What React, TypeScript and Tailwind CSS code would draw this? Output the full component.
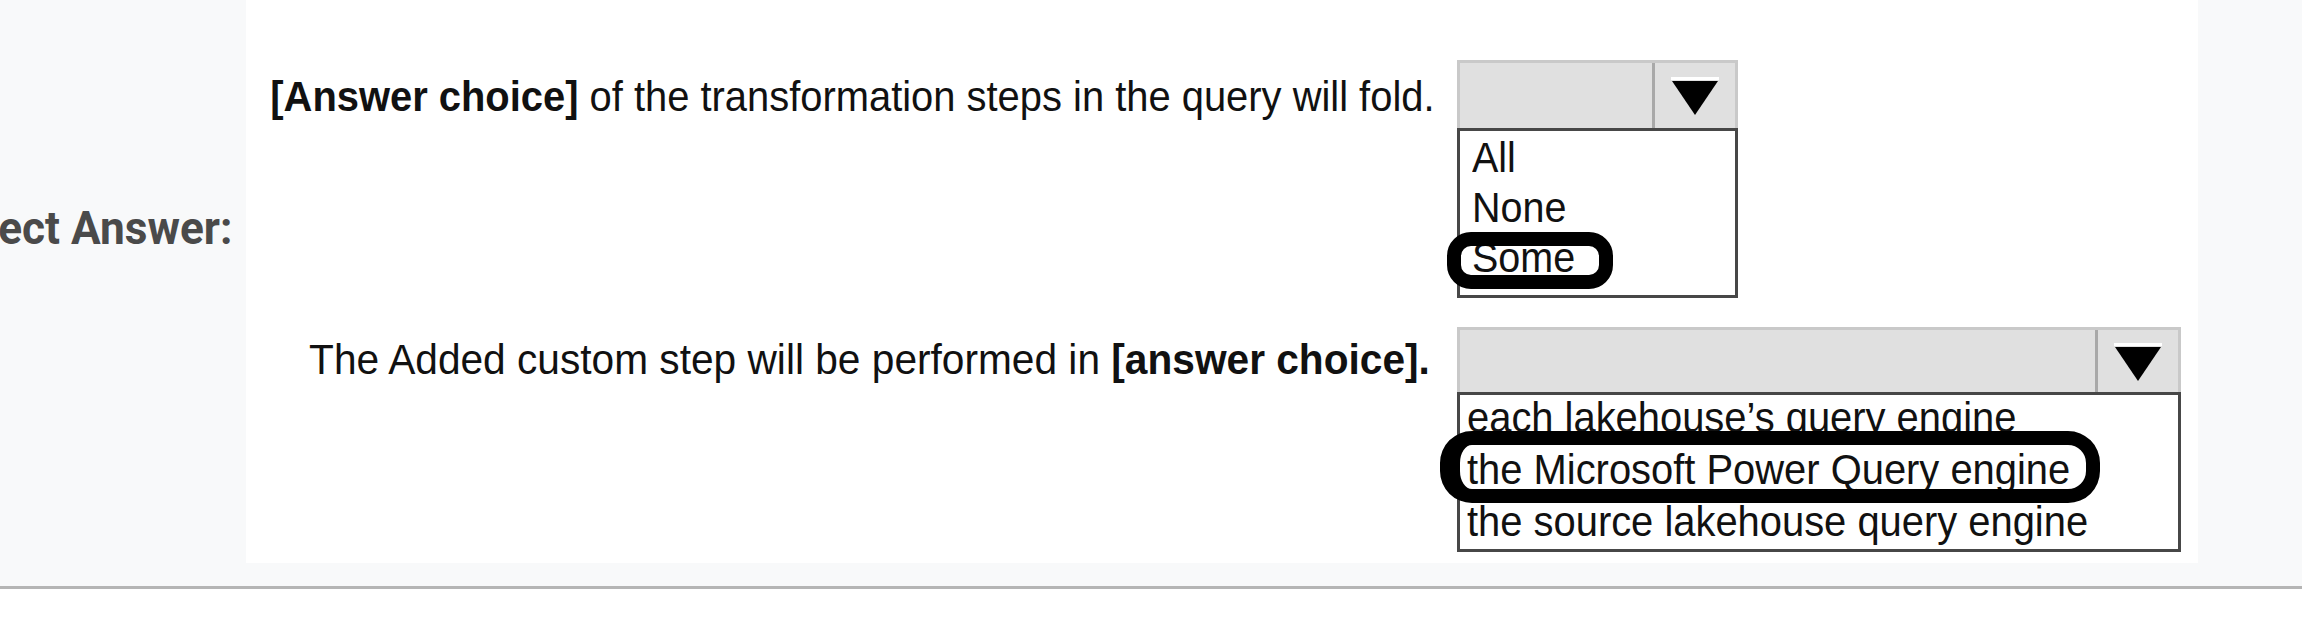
function Arrow() {
  return (
    <svg width="52" height="40" viewBox="0 0 52 40">
      <rect x="2" y="0" width="48" height="3" fill="#ffffff" />
      <polygon points="3,4 49,4 26,38" fill="#000000" />
    </svg>
  )
}

function SelectHeader({ className }: { className: string }) {
  return (
    <div className={`flex bg-[#e0e0e0] border-[3px] border-b-0 border-[#c9c9c9] ${className}`}>
      <div className="flex-1 border-r-[3px] border-[#a9a9a9]" />
      <div className="w-[80px] flex items-center justify-center pt-[3px]">
        <Arrow />
      </div>
    </div>
  )
}

export default function App() {
  return (
    <div className="w-[2302px] h-[630px] bg-white overflow-hidden">
      <div className="flex items-start h-[589px] bg-[#f8f9fa] border-b-[3px] border-[#b5b5b5]">
        {/* label column, the start of the text runs off the page */}
        <div className="w-[246px] shrink-0 overflow-hidden flex justify-end pr-[14px] pt-[204px]">
          <span className="inline-block whitespace-nowrap font-['Roboto',sans-serif] font-bold text-[47px] leading-none text-[#4a4a4a] origin-right scale-x-[0.94]">
            Correct Answer:
          </span>
        </div>

        {/* answer image */}
        <div className="w-[1952px] h-[563px] bg-white pt-[60px] font-['Liberation_Sans',Arial,sans-serif] text-[42px] text-[#111111]">
          <div className="flex items-start">
            <div className="w-[1211px] h-[68px] shrink-0 flex items-center justify-end pr-[22px] pt-[5px]">
              <span className="inline-block whitespace-nowrap leading-none origin-right scale-x-[0.95]">
                <b>[Answer choice]</b> of the transformation steps in the query will fold.
              </span>
            </div>
            <div className="w-[281px]">
              <SelectHeader className="h-[68px]" />
              <div className="relative border-[3px] border-[#474747] bg-white pl-[12px] pt-[2px] pb-[12px] leading-[50px]">
                <div><span className="inline-block origin-left scale-x-[0.94]">All</span></div>
                <div><span className="inline-block origin-left scale-x-[0.94]">None</span></div>
                <div><span className="inline-block origin-left scale-x-[0.94]">Some</span></div>
                <div className="absolute left-[-13px] top-[101px] w-[166px] h-[57px] border-[14px] border-black rounded-[24px]" />
              </div>
            </div>
          </div>

          <div className="flex items-start mt-[29px]">
            <div className="w-[1211px] h-[65px] shrink-0 flex items-center justify-end pr-[27px]">
              <span className="inline-block whitespace-nowrap leading-none origin-right scale-x-[0.968]">
                The Added custom step will be performed in <b>[answer choice].</b>
              </span>
            </div>
            <div className="w-[724px]">
              <SelectHeader className="h-[65px]" />
              <div className="relative flex flex-col gap-[6px] border-[3px] border-[#474747] bg-white pl-[7px] pb-[4px] leading-[46px]">
                <div className="whitespace-nowrap"><span className="inline-block origin-left scale-x-[0.95]">each lakehouse’s query engine</span></div>
                <div className="whitespace-nowrap"><span className="inline-block origin-left scale-x-[0.95]">the Microsoft Power Query engine</span></div>
                <div className="whitespace-nowrap"><span className="inline-block origin-left scale-x-[0.95]">the source lakehouse query engine</span></div>
                <div className="absolute left-[-20px] top-[36px] w-[660px] h-[72px] border-[14px] border-l-[20px] border-black rounded-[32px]" />
              </div>
            </div>
          </div>
        </div>
      </div>
    </div>
  )
}
